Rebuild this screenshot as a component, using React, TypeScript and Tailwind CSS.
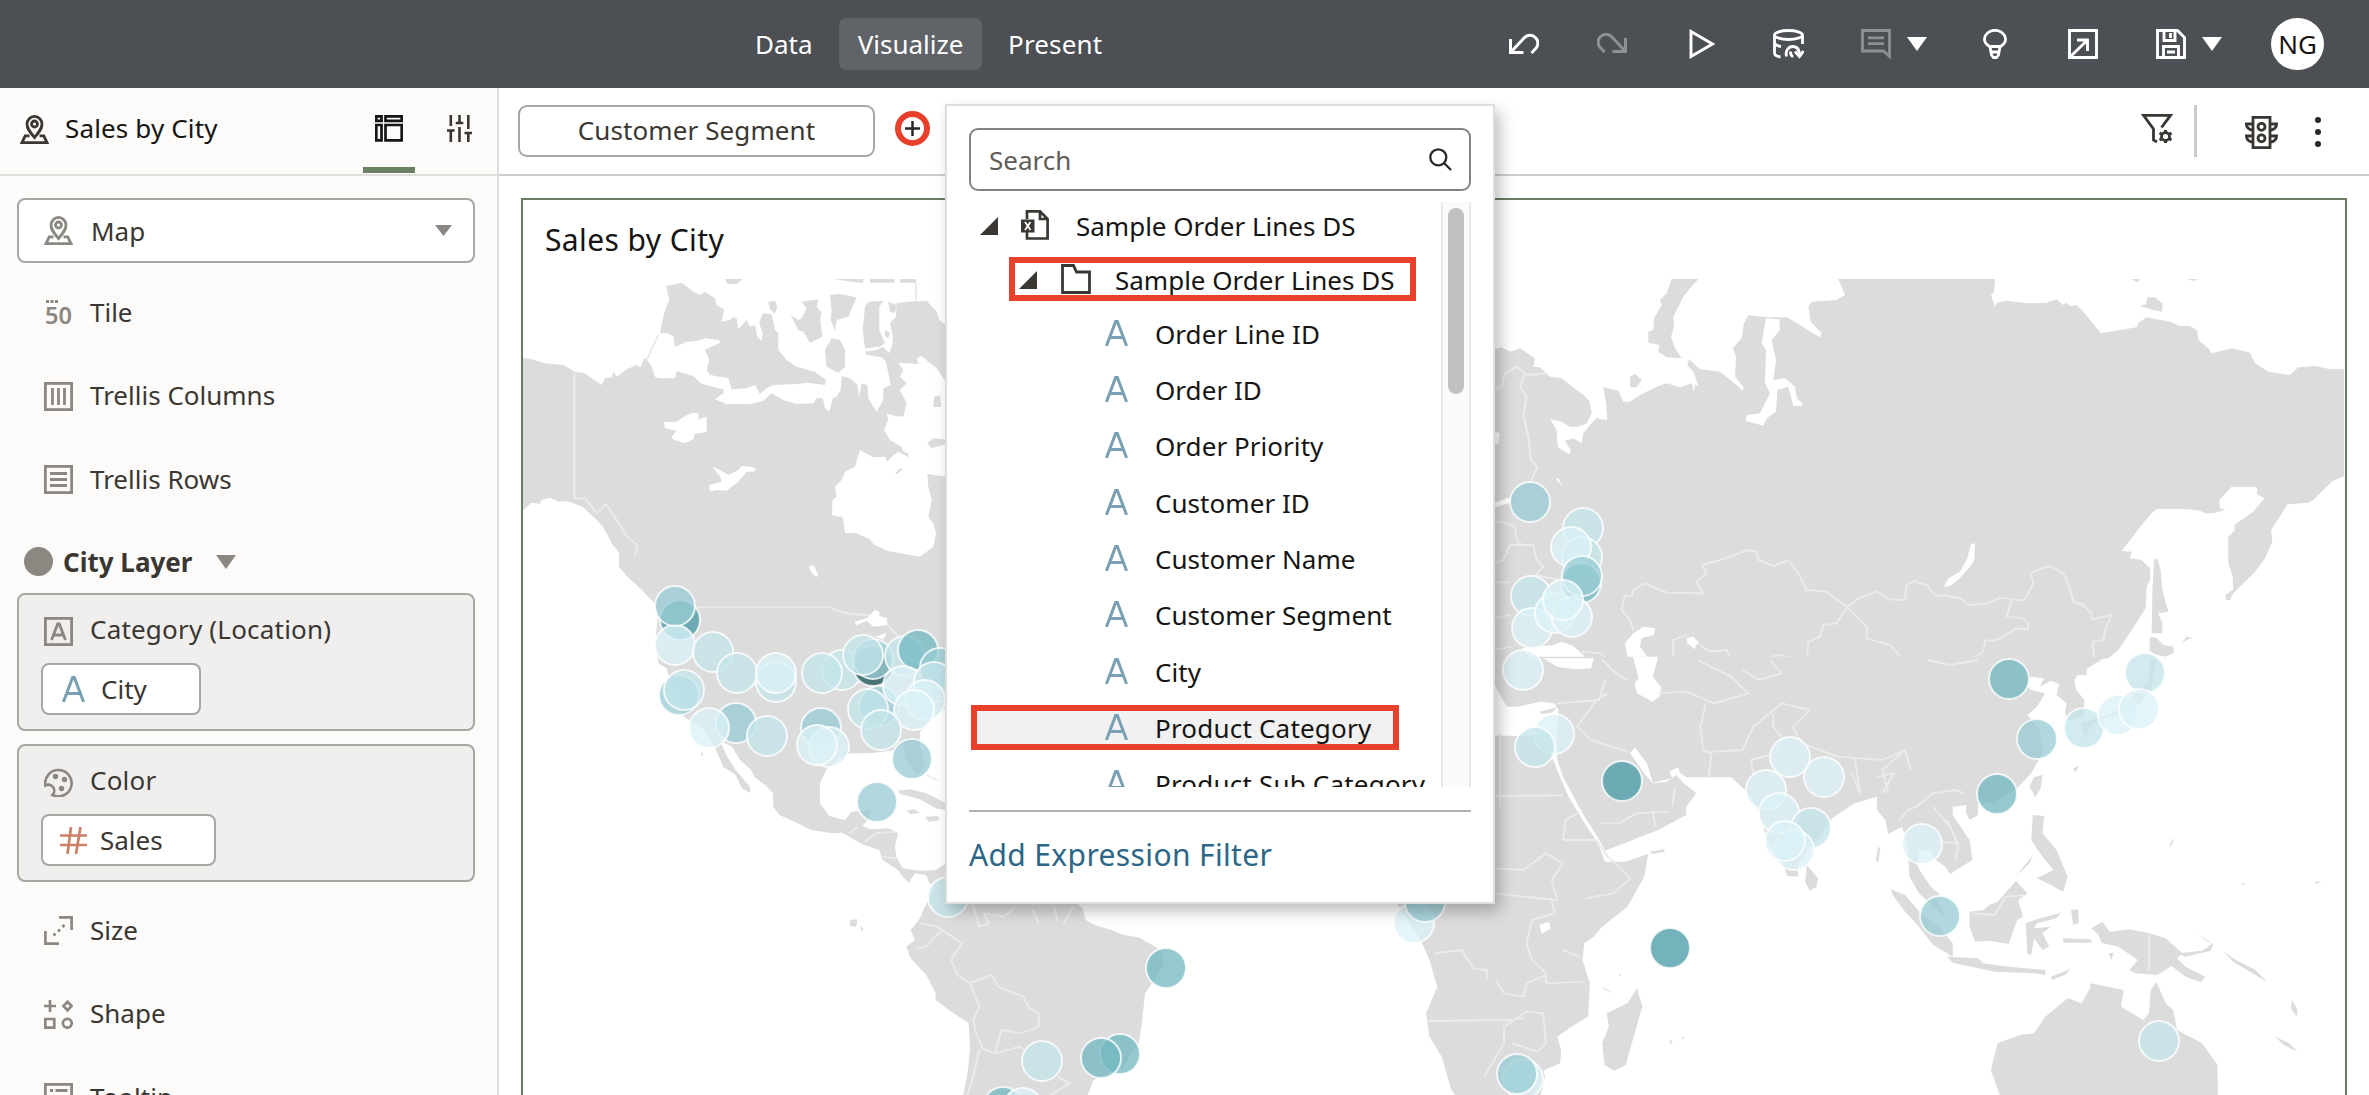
import React from 'react';

type IconProps = { className?: string };

/* ---------- icons ---------- */

function MapPin({ className }: IconProps) {
  return (
    <svg className={className} width="29" height="29" viewBox="0 0 29 29" fill="none" stroke="currentColor" strokeWidth="2.800">
      <path d="M14.500 22.500C10 17 7 13.500 7 9.200a7.500 7.800 0 0 1 15 0c0 4.300-3 7.800-7.500 13.300z" />
      <circle cx="14.500" cy="9" r="3" />
      <path d="M9.500 20.800H5.200L2 27.600h25l-3.200-6.800h-4.300" />
    </svg>
  );
}

function LetterA({ className }: IconProps) {
  return (
    <svg className={className} width="23" height="26" viewBox="0 0 23 26" fill="none" stroke="#7aa1b3" strokeWidth="3">
      <path d="M1.400 26 10.600 1.600h1.800L21.600 26M4.800 17.600h13.400" />
    </svg>
  );
}

function Caret({ className }: IconProps) {
  return (
    <svg className={className} width="20" height="14" viewBox="0 0 20 14" fill="currentColor" preserveAspectRatio="none">
      <path d="M0 0h20L10 14z" />
    </svg>
  );
}

function Expanded() {
  return (
    <svg width="18" height="18" viewBox="0 0 18 18" fill="#3a3733" className="shrink-0">
      <path d="M18 0v18H0z" />
    </svg>
  );
}

function Box({ children }: { children?: React.ReactNode }) {
  return (
    <svg width="29" height="29" viewBox="0 0 29 29" fill="none" stroke="currentColor" strokeWidth="2.800">
      <rect x="1.400" y="1.400" width="26.200" height="26.200" />
      {children}
    </svg>
  );
}

/* ---------- header ---------- */

function Header() {
  return (
    <header className="flex h-[88px] shrink-0 items-center bg-[#4c4f54] pr-[45px] text-white">
      <nav className="ml-[737px] flex h-[52px] items-center">
        <span className="flex h-full w-[102px] items-center pl-[18px]">Data</span>
        <span className="flex h-full w-[143px] items-center justify-center rounded-[7px] bg-[#606367]">Visualize</span>
        <span className="pl-[26px] tracking-[0.15px]">Present</span>
      </nav>
      <div className="ml-auto flex items-center">
        <svg width="30" height="22" viewBox="0 0 30 22" fill="none" stroke="#fff" strokeWidth="3">
          <path d="M1.500 6v13.500h13M2.500 18.500 15.500 4.600a7.700 7.700 0 0 1 11 11.200L22.500 20" />
        </svg>
        <svg className="ml-[58px]" width="30" height="22" viewBox="0 0 30 22" fill="none" stroke="#8e9093" strokeWidth="3">
          <path d="M28.500 5v13.500h-13M27.500 17.500 14.500 3.600a7.700 7.700 0 0 0-11 11.200L7.500 19" />
        </svg>
        <svg className="ml-[62px]" width="26" height="30" viewBox="0 0 26 30" fill="none" stroke="#fff" strokeWidth="2.900">
          <path d="M2 2.600v24.800L23.500 15z" />
        </svg>
        <svg className="ml-[58px]" width="31" height="30" viewBox="0 0 31 30" fill="none" stroke="#fff" strokeWidth="2.800">
          <ellipse cx="15.500" cy="6" rx="14" ry="4.500" />
          <path d="M1.500 6v18c0 2 2.500 3.500 6 4M29.500 6v9M1.500 14.500c1.500 1.500 3.500 2.500 6.500 3M13.500 27.500c-1.500-6 2-10 6.500-10 4.500 0 6.500 3.500 6.500 9" />
          <path d="m22 22.500 4.500 5 4-5.500" />
          <path d="M18 22.500c-1 2 0 4 2 5.500" />
        </svg>
        <svg className="ml-[57px]" width="30" height="30" viewBox="0 0 30 30" fill="none" stroke="#8e9093" strokeWidth="2.800">
          <path d="M1.500 1.500h27v26l-6-5.500h-21zM7 8.800h16M7 14.600h16" />
        </svg>
        <Caret className="ml-[16px] text-white" />
        <svg className="ml-[56px]" width="24" height="30" viewBox="0 0 24 30" fill="none" stroke="#fff" strokeWidth="2.800">
          <path d="M6.500 17.500C3.500 15.500 1.500 13.500 1.500 10.500a10.500 9.200 0 0 1 21 0c0 3-2 5-5 7zM7 17.500l1.500 8.500 2 2.500h3l2-2.500 1.500-8.500M8 23h8" />
        </svg>
        <svg className="ml-[61px]" width="30" height="30" viewBox="0 0 30 30" fill="none" stroke="#fff" strokeWidth="2.900">
          <path d="M1.500 1.500h27v27h-27zM3 27 18.500 12M9 11h10.500v11" />
        </svg>
        <svg className="ml-[58px]" width="30" height="30" viewBox="0 0 30 30" fill="none" stroke="#fff" strokeWidth="2.900">
          <path d="M1.500 1.500h20l7 7v20h-27zM8 1.500v10h11v-10M14.500 4v5M7.500 28V17.500h15V28M11 23h8" />
        </svg>
        <Caret className="ml-[16px] text-white" />
        <span className="ml-[49px] flex h-[52px] w-[53px] items-center justify-center rounded-full bg-white text-[#161513]">NG</span>
      </div>
    </header>
  );
}

/* ---------- sidebar ---------- */

function Row({ icon, label }: { icon: React.ReactNode; label: string }) {
  return (
    <div className="flex h-[83.5px] shrink-0 items-center pl-[44px] text-[#3a3733]">
      <span className="flex w-[46px] text-[#8b8781]">{icon}</span>
      <span className="pb-[2px]">{label}</span>
    </div>
  );
}

function Card({ icon, label, children }: { icon: React.ReactNode; label: string; children: React.ReactNode }) {
  return (
    <div className="ml-[17px] flex h-[138px] w-[458px] shrink-0 flex-col rounded-[8px] border-2 border-[#a9a7a4] bg-[#f0efee] text-[#3a3733]">
      <div className="flex h-[68px] items-center pt-[4px] pl-[25px]">
        <span className="flex w-[46px] text-[#8b8781]">{icon}</span>
        <span className="pb-[4px] tracking-[0.2px]">{label}</span>
      </div>
      <div className="flex pl-[22px]">{children}</div>
    </div>
  );
}

function Sidebar() {
  return (
    <aside className="flex w-[499px] shrink-0 flex-col overflow-hidden border-r-2 border-[#dedddb] bg-[#fcfbfa]">
      <div className="flex h-[88px] shrink-0 items-stretch border-b-2 border-[#e0dfdc] text-[#161513]">
        <div className="flex items-center pb-[4px] pl-[20px]">
          <MapPin className="text-[#3a3733]" />
          <span className="ml-[16px] pb-[2px] tracking-[0.15px]">Sales by City</span>
        </div>
        <div className="ml-auto flex w-[52px] flex-col items-center border-b-[6px] border-[#6b8060] pt-[27px] mb-px">
          <svg width="28" height="27" viewBox="0 0 28 27" fill="none" stroke="#161513" strokeWidth="2.700">
            <path d="M1.300 1.300h5.200v4.600H1.300zM10.500 1.300h16.200v4.600H10.500zM1.300 10h5.200v15.300H1.300zM10.500 10h16.200v15.300H10.500z" />
          </svg>
        </div>
        <svg className="mt-[27px] mr-[25px] ml-[32px]" width="25" height="27" viewBox="0 0 25 27" fill="none" stroke="#3a3733" strokeWidth="2.600">
          <path d="M3.800 0v11M0 15.500h7.600M3.800 15.500V27M12.500 0v8M8.700 8h7.600M12.500 12v15M21.300 0v14M17.500 18h7.500M21.300 18v9" />
        </svg>
      </div>

      <div className="mt-[22px] ml-[17px] flex h-[65px] w-[458px] shrink-0 items-center rounded-[8px] border-2 border-[#a9a7a4] bg-white pr-[21px] pl-[25px] text-[#3a3733]">
        <MapPin className="text-[#8b8781]" />
        <span className="ml-[18px]">Map</span>
        <Caret className="ml-auto h-[11px] w-[17px] text-[#8b8781]" />
      </div>

      <div className="h-[8px] shrink-0" />
      <Row
        label="Tile"
        icon={
          <svg width="29" height="28" viewBox="0 0 29 28" fill="currentColor" className="overflow-visible">
            <path d="M2 1h3v3H2zM6.500 1h3v3h-3zM11 1h3v3h-3z" />
            <text x="1" y="25" fontSize="24" fontWeight="600" textLength="27" lengthAdjust="spacingAndGlyphs">50</text>
          </svg>
        }
      />
      <Row label="Trellis Columns" icon={<Box><path d="M8.500 6v17M14.500 6v17M20.500 6v17" /></Box>} />
      <Row label="Trellis Rows" icon={<Box><path d="M6 8.500h17M6 14.500h17M6 20.500h17" /></Box>} />

      <div className="flex h-[71.5px] shrink-0 items-center pt-[9px] pl-[24px]">
        <span className="size-[29px] rounded-full bg-[#8b8781]" />
        <span className="ml-[10px] font-bold text-[#3a3733]">City Layer</span>
        <Caret className="ml-[24px] text-[#8b8781]" />
      </div>

      <Card label="Category (Location)" icon={<Box><path d="M7.500 23 13.700 7h1.600L21.500 23M9.500 18h10" /></Box>}>
        <div className="flex h-[52px] w-[160px] items-center rounded-[8px] border-2 border-[#a9a7a4] bg-white pl-[19px]">
          <LetterA />
          <span className="ml-[16px]">City</span>
        </div>
      </Card>
      <div className="h-[13px] shrink-0" />
      <Card
        label="Color"
        icon={
          <svg width="29" height="29" viewBox="0 0 29 29" fill="none" stroke="currentColor" strokeWidth="2.600">
            <path d="M1.400 17.500A13.200 13.200 0 1 1 8.500 27c2-2 2.500-5.500.5-8-1.800-2.200-5-2.800-7.600-1.500z" />
            <g fill="currentColor" stroke="none">
              <circle cx="11.500" cy="8.500" r="2.700" />
              <circle cx="20.500" cy="11.500" r="2.700" />
              <circle cx="17.500" cy="20.500" r="2.700" />
            </g>
          </svg>
        }
      >
        <div className="flex h-[52px] w-[175px] items-center rounded-[8px] border-2 border-[#a9a7a4] bg-white pl-[17px]">
          <svg width="27" height="27" viewBox="0 0 27 27" fill="none" stroke="#cc7f69" strokeWidth="2.700">
            <path d="M0 8.500h27M0 18h27M11 0 7.500 27M20.500 0 16 27" />
          </svg>
          <span className="ml-[13px]">Sales</span>
        </div>
      </Card>

      <div className="h-[7px] shrink-0" />
      <Row
        label="Size"
        icon={
          <svg width="29" height="29" viewBox="0 0 29 29" fill="none" stroke="currentColor" strokeWidth="2.700">
            <path d="M15 1.400h12.600V14M1.400 15v12.600H15" />
            <path d="M9.500 17.500 11.500 19.500M14 13.500l2 2M18.500 9l2 2" strokeWidth="2.800" />
          </svg>
        }
      />
      <Row
        label="Shape"
        icon={
          <svg width="29" height="29" viewBox="0 0 29 29" fill="none" stroke="currentColor" strokeWidth="2.700">
            <path d="M6 0v12M0 6h12M23.500 1.800 27.500 6l-4 4.200-4-4.200zM1.300 19h9v8.700h-9z" />
            <circle cx="23.300" cy="23.300" r="4.400" />
          </svg>
        }
      />
      <Row label="Tooltip" icon={<Box><path d="M6 7.500h3M11.500 7.500h12M6 13.500h3M11.500 13.500h12" /></Box>} />
    </aside>
  );
}

/* ---------- toolbar ---------- */

function FilterBar() {
  return (
    <div className="flex h-[88px] shrink-0 items-center border-b-2 border-[#d0cecb] bg-white pb-px pl-[19px]">
      <div className="flex h-[52px] w-[357px] items-center justify-center rounded-[9px] border-2 border-[#a9a7a4] pb-[2px] tracking-[0.1px] text-[#3a3733]">
        Customer Segment
      </div>
      <div className="mb-[4px] ml-[20px] flex size-[35px] items-center justify-center rounded-full border-[6px] border-[#e8402a]">
        <svg width="15" height="15" viewBox="0 0 15 15" stroke="#2b2825" strokeWidth="2.500">
          <path d="M7.500 0v15M0 7.500h15" />
        </svg>
      </div>
      <svg className="mr-[21px] mb-[3px] ml-auto" width="32" height="30" viewBox="0 0 32 30" fill="none" stroke="#3a3733" strokeWidth="2.800">
        <path d="M20.500 13.500 29.500 1.400h-27L12.500 15v11l3.500 2" />
        <circle cx="24.500" cy="22.500" r="4" />
        <path d="M24.500 16v2.500M24.500 26.500V29M18.500 19l2.300 1.300M28.300 24.700l2.200 1.300M30.500 19l-2.200 1.300M20.800 24.700 18.500 26" />
      </svg>
      <span className="h-[52px] w-[3px] bg-[#cccac8]" />
      <svg className="mt-[4px] ml-[48px]" width="33" height="33" viewBox="0 0 33 33" fill="none" stroke="#3a3733" strokeWidth="2.800">
        <path d="M8 1.400h17v30.200H8zM8 14.500C4 13.500 1.400 11.500 1.400 8H8M8 26.500c-4-1-6.600-3-6.600-6.500H8M25 14.500c4-1 6.600-3 6.600-6.500H25M25 26.500c4-1 6.600-3 6.600-6.500H25" />
        <circle cx="16.500" cy="10.800" r="3.500" />
        <circle cx="16.500" cy="22.300" r="3.500" />
      </svg>
      <svg className="mt-[2px] mr-[48px] ml-[37px]" width="6" height="30" viewBox="0 0 6 30" fill="#2b2825">
        <circle cx="3" cy="3" r="3" />
        <circle cx="3" cy="15" r="3" />
        <circle cx="3" cy="27" r="3" />
      </svg>
    </div>
  );
}

/* ---------- map ---------- */

const TONES = {
  pale: '#dbf2f7',
  light: '#c3e5ea',
  mid: '#98ccd4',
  deep: '#74b9c2',
  dark: '#4b9ca8',
  slate: '#1f5459',
};

type Tone = keyof typeof TONES;

const BUBBLES: [number, number, Tone][] = [
  [680, 620, 'dark'], [675, 645, 'pale'], [675, 606, 'mid'], [713, 652, 'light'], [737, 673, 'light'],
  [776, 682, 'light'], [776, 673, 'pale'], [842, 670, 'light'], [822, 673, 'light'], [873, 666, 'slate'],
  [873, 659, 'mid'], [863, 655, 'light'], [905, 656, 'light'], [918, 650, 'deep'],
  [940, 668, 'mid'], [679, 695, 'mid'], [684, 690, 'light'], [736, 723, 'mid'], [709, 728, 'pale'],
  [767, 736, 'light'], [821, 728, 'mid'], [829, 747, 'pale'], [817, 745, 'pale'], [879, 706, 'mid'],
  [868, 709, 'light'], [903, 686, 'pale'], [934, 682, 'light'], [925, 700, 'pale'], [914, 710, 'pale'],
  [881, 730, 'light'], [912, 759, 'mid'], [877, 802, 'mid'], [948, 897, 'light'], [1166, 968, 'deep'],
  [1120, 1054, 'deep'], [1101, 1058, 'deep'], [1042, 1061, 'light'], [1003, 1107, 'deep'], [1023, 1108, 'pale'],
  [1414, 923, 'pale'], [1425, 902, 'mid'], [1530, 502, 'mid'], [1583, 528, 'light'], [1582, 557, 'light'],
  [1571, 547, 'pale'], [1581, 583, 'deep'], [1582, 576, 'mid'], [1531, 596, 'light'], [1532, 628, 'pale'],
  [1555, 613, 'pale'], [1572, 617, 'pale'], [1563, 600, 'pale'], [1523, 670, 'pale'], [1554, 734, 'pale'],
  [1535, 747, 'light'], [1622, 781, 'dark'], [1790, 757, 'pale'], [1824, 777, 'pale'], [1766, 790, 'pale'],
  [1779, 813, 'pale'], [1811, 828, 'light'], [1794, 850, 'pale'], [1785, 841, 'pale'], [1922, 844, 'pale'],
  [2009, 679, 'deep'], [2037, 739, 'mid'], [1997, 794, 'deep'], [1940, 916, 'mid'], [1670, 948, 'dark'],
  [2159, 1041, 'light'], [2145, 673, 'light'], [2084, 728, 'light'], [2118, 715, 'pale'], [2139, 709, 'pale'],
  [1523, 1079, 'pale'], [1517, 1074, 'mid'],
];

function Land({ d }: { d: string }) {
  return <path d={d} fill="#dcdcdc" />;
}
function Water({ d }: { d: string }) {
  return <path d={d} fill="#fff" />;
}
function Border({ d }: { d: string }) {
  return <path d={d} fill="none" stroke="#ebebeb" strokeWidth="1.900" strokeLinejoin="round" vectorEffect="non-scaling-stroke" />;
}

function WorldMap() {
  return (
    <svg width="1821" height="816" viewBox="523 279 1821 816" className="block">
      {/* North America */}
      <g transform="translate(520 270) scale(.33333)">
        <Land d="M0 262 35 268 75 280 130 285 165 305 195 310 215 325 245 345 255 325 275 322 280 305 290 320 320 298 350 285 362 292 372 265 380 268 395 290 405 320 415 325 465 325 470 303 520 318 545 342 570 348 610 358 612 368 585 388 620 402 690 403 730 392 755 370 790 390 830 402 880 400 890 385 908 384 915 415 928 425 938 385 950 380 962 360 965 318 990 325 1012 345 1018 380 1025 340 1042 345 1045 385 1060 410 1070 425 1090 390 1090 355 1112 345 1105 310 1098 275 1085 262 1040 255 1035 245 1070 240 1090 230 1108 250 1118 220 1118 195 1110 160 1128 140 1130 100 1165 95 1220 92 1250 125 1258 150 1290 175 1290 345 1270 325 1250 295 1225 275 1205 258 1190 265 1195 282 1135 278 1150 300 1140 320 1160 340 1140 360 1160 400 1150 440 1125 438 1100 430 1105 450 1092 480 1110 510 1145 530 1150 545 1165 550 1165 562 1135 545 1120 555 1102 575 1095 560 1060 562 1020 540 1005 590 975 605 965 630 945 650 950 680 938 690 935 735 968 742 975 790 1005 788 1050 808 1060 822 1100 842 1200 860 1240 830 1248 790 1240 760 1225 740 1235 690 1225 650 1222 612 1290 622 1290 1215 445 1215 440 1195 415 1180 405 1120 415 1030 400 995 350 945 320 918 297 890 297 848 275 820 260 790 245 765 225 745 190 712 160 700 140 693 115 695 90 683 65 690 60 702 35 698 9 720 0 722z" />
        <Land d="M438 48 485 38 520 65 540 75 555 65 585 85 590 105 612 118 605 155 630 150 640 140 650 145 655 178 680 150 690 170 705 165 712 200 725 212 728 190 718 160 728 130 755 133 765 180 775 190 775 240 800 270 830 290 885 305 918 330 915 345 860 338 830 342 760 345 740 355 720 372 705 345 680 355 635 358 625 325 570 315 560 300 568 270 555 240 600 218 598 210 555 205 535 212 500 215 465 230 460 200 445 190 420 190 428 150 435 120 448 90z" />
        <Land d="M745 95 765 92 772 110 765 132 750 118zM812 135 835 150 845 145 860 115 845 95 895 88 890 110 905 128 900 145 907 200 870 218 850 185 835 180zM930 75 960 72 1010 82 985 140 950 150 945 182 932 150 935 120zM935 205 960 210 975 240 975 290 955 308 920 290 915 240zM1045 95 1090 92 1078 110 1078 180 1095 220 1080 230 1035 235 1028 180 1035 110zM1095 180 1110 188 1105 205 1095 198zM1105 95 1130 105 1125 130 1110 125zM615 27H668L650 42H622zM940 27H1030V38L1000 36zM1050 27H1124V38H1050zM1140 27H1188V38H1140zM1242 380 1260 376 1264 410 1240 412zM1222 520 1240 505 1290 510V520L1235 534zM1125 610 1140 595 1148 598 1132 612z" />
        <Water d="M432 456 470 455 495 438 520 428 535 430 535 448 560 440 560 485 540 490 525 490 520 508 495 520 458 508 455 500 470 482 435 475z" />
        <Water d="M578 592 600 600 625 615 655 600 665 588 695 590 708 598 700 605 680 605 655 635 620 662 590 660 570 665 568 645 605 635 600 618z" />
        <Water d="M868 888 882 886 895 918 888 920 872 905zM1003 1055 1040 1045 1065 1020 1078 1025 1078 1038 1100 1045 1103 1065 1060 1070 1040 1052 1010 1066zM1065 1100 1100 1088 1090 1108z" />
        <Border d="M163 310V685H195L230 730 258 702 280 735 300 765 320 800 352 825 345 858M530 1012H935L945 1020 990 1032 1050 1035M1103 1065 1140 1105M415 195 380 270M1188 38V92" />
      </g>

      {/* Central and South America */}
      <g transform="translate(520 660) scale(.625 .33333)">
        <Land d="M235-10 240 60 262 170 290 200 312 262 325 320 345 345 355 385 368 398 368 380 345 330 330 285 320 240 340 262 352 300 370 330 375 350 395 380 405 400 405 440 415 465 450 495 465 510 500 520 515 518 550 555 575 570 580 600 605 630 610 645 622 668 632 640 650 645 655 670 680 680 700 620 682 610 665 630 640 632 612 625 602 590 600 560 605 520 590 505 560 508 548 498 560 470 562 450 530 455 520 480 495 468 480 430 480 370 490 330 510 295 530 280 560 280 580 275 600 270 612 250 618 300 635 345 648 320 640 260 640 215 665 170 690 130V-10z" />
        <Land d="M605 392 625 388 650 400 682 430V450L665 445 640 418 608 402zM618 452 630 448 640 458 625 462zM648 470 668 468 672 480 655 486zM290 275 294 285 290 288zM528 780 540 778 538 800 528 798zM545 795 550 810 545 812z" />
        <Land d="M655 640 665 660 660 700 645 750 640 775 625 810 632 840 618 860 625 895 650 945 665 1000 665 1020 690 1055 718 1090 720 1170 716 1240 708 1320H905L918 1260 940 1240 965 1220 990 1150 995 1090 1000 1000 1015 960 1030 915 1025 870 990 832 965 825 950 812 920 795 905 780 900 745 885 720 860 640z" />
        <Border d="M650 345 668 360M528 520 540 500M552 545 570 520 600 515M580 590 602 595M635 865 650 860 675 810 668 800 640 790M675 810 708 850 700 870 690 900 700 945 720 970 755 945 765 980 805 1010 815 1045 830 1060 830 1100 800 1120 770 1110 760 1180 740 1165 730 1120 725 1080 735 1040 720 970M760 1180 800 1160 830 1200M725 735 735 800 750 790 742 760 775 770 790 745M820 750 830 790M855 740 860 785M870 790 885 740M860 1250 880 1270 845 1310M735 1170 725 1250 715 1310" />
      </g>

      {/* Europe, Russia and Kazakhstan */}
      <g transform="translate(1490 270) scale(.33333)">
        <Land d="M0 240 35 232 60 245 90 235 110 248 135 265 130 290 150 292 180 320 215 325 240 345 280 375 300 395 305 430 290 460 265 470 240 470 215 455 180 448 200 480 203 530 225 545 240 552 242 540 225 512 250 505 275 520 280 490 300 465 320 445 352 450 348 400 340 352 385 362 400 395 420 395 450 375 500 350 530 340 570 352 605 340 612 365 615 345 625 348 610 305 592 285 597 268 630 298 690 305 740 345 758 362 760 350 735 320 738 260 728 235 755 205 762 160 775 135 830 142 890 142 940 170 960 185 990 202 995 190 962 155 955 110 965 95 1040 90 1065 75 1045 27H1330V1215H0z" />
        <Land d="M545 27H625L600 55 580 80 550 140 552 170 543 200 555 235 575 265 530 262 505 245 508 225 475 218 475 185 490 180 492 145 515 105 510 90 530 70zM420 320 435 312 455 330 440 352 420 352z" />
        <Water d="M828 145 868 148 870 180 845 210 858 270 850 330 885 325 915 350 920 385 937 400V408H910L895 350 862 360 858 425 830 445 820 467 768 452 770 435 810 430 840 370 825 340 828 240 815 220z" />
        <Water d="M197 628 205 625 218 647zM10 700 60 682V698L15 712zM15 485 30 490 25 520 10 525zM405 1120 430 1090 460 1070 495 1075 492 1095 455 1105 450 1130 475 1165 490 1190V1215H430L410 1150zM95 1135 190 1125 215 1115 250 1128 285 1160 305 1170 303 1190 230 1213 150 1195zM590 1105 610 1100 628 1120 618 1125 615 1138 592 1120z" />
        <Border d="M10 360 35 350 45 310 80 290 105 310 90 350 110 380 100 435 115 500 122 570 142 590 120 640M10 880 40 870 60 825 130 825 140 870 160 890 135 915 185 925 210 930M10 755 40 757 75 770 80 810 95 825M10 937 60 937M10 1045 60 1035M10 1140 65 1130M110 315 170 310M430 1080 420 1050 395 1020 405 975 425 980 430 960 465 940 530 968 640 970 620 935 650 910 635 885 690 870 775 840 800 845 805 870 850 888 895 870 925 910 950 960 1010 965 1055 1000 1072 1012 1105 985 1160 965 1200 988 1245 990 1250 945 1275 932 1330 950M1072 1012 1040 1060 1000 1065 990 1100 955 1115 950 1175 870 1155 820 1165 775 1205M1072 1012 1130 1070 1130 1105 1200 1125 1235 1165 1330 1168M550 1190V1110L590 1095M630 1125 660 1145 710 1140 735 1190M275 1145 330 1150 390 1195M500 1175 550 1185 600 1170 620 1200" />
      </g>

      {/* Eastern Siberia, Mongolia and Kamchatka */}
      <g transform="translate(1920 270) scale(.33333)">
        <Land d="M-10 27H225L222 65 213 75 225 110 232 98 260 92 320 100 380 98 410 88 430 105 440 98 450 108 470 105 490 125 520 162 543 190 650 172 655 158 680 142 750 155 780 168 810 168 832 182 835 210 865 235 875 250 935 235 990 248 1005 280 1045 305 1110 315 1135 292 1185 288 1230 298H1272V618L1235 635 1180 690 1165 698 1103 703 1053 780 1057 815 1035 865 1005 905 975 935 940 970 930 990H917V975L940 958 938 920 925 880 925 800 945 780 943 765 1000 725 1033 685 1010 672 1012 658 1005 650H935L898 690 900 715 915 720 880 730 855 730 840 722 805 718 740 716 710 718 695 730 665 765 605 843 635 845 630 865 665 870 690 895V930L680 950 677 1015 635 1080 595 1140 565 1165 500 1175V1215H-10z" />
        <Land d="M702 870 712 865 722 900 727 960 745 1025 715 1030 727 1060V1090H695L697 970zM690 1100 708 1103 730 1125 760 1130 762 1150 735 1160 700 1152 688 1140zM780 1125 800 1100 818 1103 795 1112zM660 108 678 103 682 82 705 82 727 100V125L700 120zM632 27H660L655 37zM800 27H836L820 32zM750 200 762 198 758 205z" />
        <Water d="M153 822 165 820 163 870 150 890 120 925 90 948 72 950 85 925 120 905 142 865z" />
        <Border d="M-10 938 20 945 40 970 55 980 70 975 120 985 145 1005 205 1000 240 983 310 992 325 970 340 940 332 910 365 895 390 888 430 910 450 955 460 995 490 1005 515 1030V1048L575 1035 555 1080 550 1110 518 1115 522 1160 440 1200M275 990 260 1040 310 1045 325 1060V1078L290 1075 230 1110 195 1112 190 1145 150 1172 80 1190 40 1175-10 1165" />
      </g>

      {/* Africa, South Asia and Oceania */}
      <g transform="translate(1490 660) scale(.56086 .33333)">
        <Land d="M-10-10H1075L1090 0 1050 40 1042 60 1045 90 1060 120 1058 170 1032 182 1025 160 1028 130 1010 105 1015 72 1000 62 980 80 988 55 965 50 955 75 965 90 990 100 975 140 958 165 980 205 985 280 965 340 940 385 900 425 850 435 825 440 825 465 855 540 860 600 820 642 812 620 795 600 785 570 765 575 762 620 790 690 812 770 790 740 765 700 748 650 745 560 735 500 710 522 705 480 690 450 690 410 650 430 610 475 590 530 575 550 548 615 550 650 530 648 520 600 495 540 475 440 455 390 430 352 350 352 340 340 335 322 320 335 325 355 290 368 280 310 258 262 250 280 275 340 290 370 315 365 332 345 345 370 368 400 350 440 350 465 300 510 205 572 195 540 165 460 130 350 120 300 118 240 122 150 115 130 90 125 50 140 30 140 10 80z" />
        <Land d="M-200 215 45 228 100 225 112 240 110 290 125 350 140 410 165 480 185 530 195 560 205 605 240 605 282 582 275 650 245 740 200 800 185 830 168 850 165 900 178 970 175 1070 145 1100 120 1130 127 1170 125 1210 95 1232 98 1250 88 1320H-55L-69 1290-86 1190-108 1130-114 1060-94 980-108 900-125 835-164 735z" />
        <Water d="M255-10H300L290 50 305 80 303 108 290 125 262 100 258 70 265 55zM95-5H185L180 25 150 28 120 20zM88 795 105 785 108 805 92 822z" />
        <Land d="M88 155 120 142 110 158 92 162zM565 615 585 655 582 680 570 692 562 665zM850 430 870 422V465L855 480 848 455zM970 352 985 345 982 385 972 412 962 378zM262 985 272 1040 268 1060 242 1215 222 1232 204 1215 200 1150 212 1100 208 1060 245 1030zM715 688 740 705 768 760 800 800 825 850V890L790 855 765 800 740 755 718 705zM815 890 870 895 880 910 925 920 990 930V945L970 940 900 935 825 908zM1000 950 1035 928 1025 945 1002 960zM855 755 880 750 890 735 905 725 938 662 958 700 942 720 950 770 940 780 925 852 890 842 865 845 855 800zM955 790 975 778 1018 758 1010 775 975 790 970 805 1000 800 985 820 997 860 985 870 970 835 965 885 958 880zM968 465 988 468 985 520 1010 570 1030 650 1022 695 1000 675 975 655 1005 630 985 590 965 540zM935 655 968 585 962 610 940 645zM1036 750 1048 748 1050 790 1040 795zM1022 835 1072 838V848H1022zM1072 805 1092 785 1105 815 1140 808 1175 820 1205 835 1235 880 1225 895 1240 920 1275 950 1268 967 1240 950 1215 918 1190 945 1150 940 1140 930 1155 900 1120 860 1090 848 1085 825zM1228 880 1270 872 1290 848 1285 872 1240 890zM1260 820 1292 855 1275 840zM1103 880 1112 878 1108 900zM912 1320 893 1230 905 1150 945 1125 970 1120 990 1070 1030 1015 1055 1030 1070 985 1070 970 1130 990 1125 1040 1165 1080 1175 1060 1178 990 1188 965 1205 1030 1218 1050 1225 1110 1270 1150 1297 1215 1298 1320zM1308 875 1330 900 1365 930 1385 965 1355 935 1325 905zM1400 1130 1425 1150 1440 1175 1415 1155zM1430 1020 1440 1050 1438 1070 1428 1045zM285 575 310 568 312 575 290 582zM692 560 696 565 692 608 688 600zM750 615 764 620 770 660 800 700 805 715 780 700zM1040 325 1050 318 1044 338zM1210 560 1220 530 1216 555zM1340 668 1348 672 1342 675zM1470 665 1482 664 1474 672zM320 1140 326 1142 322 1155zM342 1130 347 1132 343 1138zM230 940 234 944 230 948zM200 980 220 1000 205 990zM1158 90 1175 60 1178-5 1188 0 1180 80 1160 130 1120 165 1090 175 1070 200 1060 240 1055 190 1110 160z" />
        <Border d="M10 408 130 406M18 220V440M-100 880-50 870-30 925-5 930-5 960M-110 1083 20 1080 60 1075M-10 1250 25 1150 25 1100 65 1055 95 1060 100 1150 85 1175 40 1150M10 625 60 630 100 580 130 610 110 660 120 720 60 710 10 700M130 540 190 540 210 590 250 655 220 700 170 715M110 720 115 760 75 780 65 850 75 900 100 940 100 970 170 965M10 960 25 1000 60 1010 65 970 100 945M130 870 160 890M205 60 195 120 120 130M155 200 190 120 210 100M155 200 180 240 245 275M200 0 225 40 245 60M300 100 350 95 400 130 460 100 430 50 370 0M385 130 375 200 380 270 395 280 390 350M395 275 450 270 470 200 520 130 570 150 540 200 555 250 620 290 700 300 740 270 750 330M470 350 465 300 510 280 520 230 505 200 505 160M650 290 660 400 645 340M690 350 720 340 700 400M740 270 700 330 710 400M730 480 745 450 760 440 790 400 830 390 845 400M790 440 820 500 835 550 800 545M815 480 835 560 830 600M450 30 480 60 520 40 500 0M860 760 900 765 920 710 955 705M1175 825V930M195 490 230 490 260 460 320 455M330 380 325 440M290 455 295 500M160 455 135 480 130 540M780 0 820 15 870 0" />
      </g>

      {BUBBLES.map(([x, y, tone], i) => (
        <circle key={i} cx={x} cy={y} r="20" fill={TONES[tone]} fillOpacity=".77" stroke="#fff" strokeOpacity=".8" strokeWidth="2" />
      ))}
    </svg>
  );
}

/* ---------- filter picker ---------- */

const COLUMNS = [
  'Order Line ID', 'Order ID', 'Order Priority', 'Customer ID', 'Customer Name',
  'Customer Segment', 'City', 'Product Category', 'Product Sub Category',
];

function FilterPicker() {
  return (
    <div className="absolute top-[104px] left-[945px] flex h-[800px] w-[550px] flex-col border-2 border-[#dededd] bg-white px-[22px] pt-[22px] text-[#161513] shadow-[5px_7px_14px_rgba(0,0,0,0.26)]">
      <div className="flex h-[63px] w-[502px] shrink-0 items-center rounded-[9px] border-2 border-[#85827e] pr-[17px] pl-[18px] text-[#5f5c58]">
        <span className="pt-px">Search</span>
        <svg className="mb-px ml-auto" width="23" height="23" viewBox="0 0 23 23" fill="none" stroke="#2b2825" strokeWidth="2.300">
          <circle cx="9.300" cy="9.300" r="8" />
          <path d="m15 15 7 7" />
        </svg>
      </div>

      <div className="mt-[11px] flex h-[585px] w-[502px] shrink-0">
        <div className="flex w-[472px] flex-col overflow-hidden whitespace-nowrap">
          <div className="flex h-[51px] shrink-0 items-center pb-[4px] pl-[11px]">
            <Expanded />
            <svg className="mb-[2px] ml-[23px]" width="28" height="30" viewBox="0 0 28 30" fill="none" stroke="#3a3733" strokeWidth="2.700">
              <path d="M6 9V1.400h13L26.600 9v19.500H6v-7M19 1.400V9h7.600" />
              <path d="M0 9.500h13.500v13H0z" fill="#3a3733" stroke="none" />
              <path d="m4 12 5.500 8M9.500 12 4 20" stroke="#fff" strokeWidth="1.800" />
            </svg>
            <span className="ml-[27px]">Sample Order Lines DS</span>
          </div>
          <div className="relative flex h-[54px] shrink-0 items-center pl-[50px]">
            <Expanded />
            <svg className="ml-[24px] mb-[2px]" width="30" height="30" viewBox="0 0 30 30" fill="none" stroke="#3a3733" strokeWidth="2.800">
              <path d="M1.500 1.500h11l3 6.500h13v20.500h-27z" />
            </svg>
            <span className="ml-[24px]">Sample Order Lines DS</span>
            <span className="absolute top-[4px] left-[40px] h-[44px] w-[407px] border-[6px] border-[#e8402a]" />
          </div>
          {COLUMNS.map((name) => (
            <div key={name} className="relative flex h-[56.350px] shrink-0 items-center pl-[136px]">
              {name === 'Product Category' && (
                <>
                  <span className="absolute top-[4px] left-[2px] h-[45px] w-[428px] bg-[#f1f1f1]" />
                  <span className="absolute top-[4px] left-[2px] z-10 h-[45px] w-[428px] border-[6px] border-[#e8402a]" />
                </>
              )}
              <LetterA className="relative mb-[5px]" />
              <span
                className={
                  name.startsWith('Product')
                    ? 'relative ml-[27px] pb-[3px] tracking-[0.2px]'
                    : 'relative ml-[27px] pb-[3px] tracking-[0.05px]'
                }
              >
                {name}
              </span>
            </div>
          ))}
        </div>
        <div className="flex w-[30px] justify-center border-x-2 border-[#e8e8e8] bg-[#fafafa] pt-[6px]">
          <div className="h-[186px] w-[16px] rounded-full bg-[#c1c1c1]" />
        </div>
      </div>

      <div className="mt-[23px] h-[2px] w-[502px] shrink-0 bg-[#b2b1b0]" />
      <span className="mt-[22px] text-[30px] leading-[42px] tracking-[0.36px] text-[#2c6788]">Add Expression Filter</span>
    </div>
  );
}

export default function App() {
  return (
    <div className="relative flex h-[1095px] w-[2369px] flex-col overflow-hidden bg-white font-['Noto_Sans','Open_Sans',sans-serif] text-[26px] leading-[36px]">
      <Header />
      <div className="flex min-h-0 flex-1">
        <Sidebar />
        <main className="flex min-w-0 flex-1 flex-col">
          <FilterBar />
          <section className="mt-[22px] ml-[22px] flex w-[1826px] min-h-0 flex-1 flex-col overflow-hidden border-2 border-b-0 border-[#6b7d60]">
            <h2 className="h-[79px] shrink-0 pt-[19px] pl-[22px] text-[30px] leading-[42px] tracking-[0.4px] text-[#161513]">Sales by City</h2>
            <WorldMap />
          </section>
        </main>
      </div>
      <FilterPicker />
    </div>
  );
}
